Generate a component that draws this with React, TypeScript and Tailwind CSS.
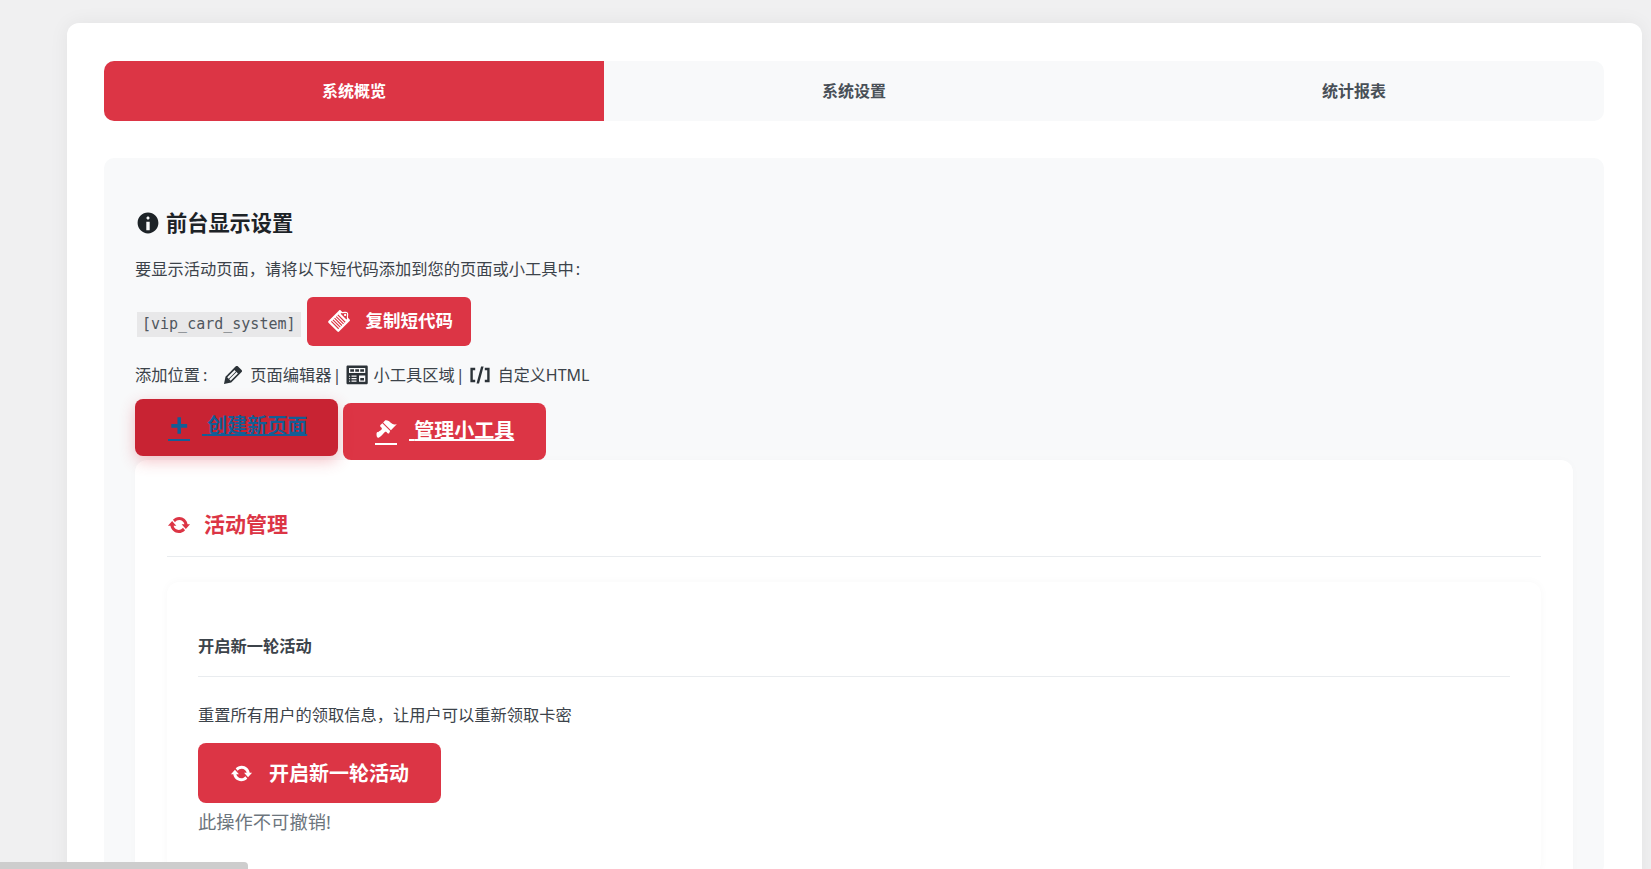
const updatePath =
  "M10.2 3.28c3.53 0 6.43 2.61 6.92 6h2.08l-3.5 4-3.5-4h2.32c-.45-1.97-2.21-3.45-4.32-3.45-1.45 0-2.73.71-3.54 1.78L4.95 5.66C6.23 4.2 8.11 3.28 10.2 3.28zm-.4 13.44c-3.52 0-6.43-2.61-6.92-6H.8l3.5-4c1.17 1.33 2.33 2.67 3.5 4H5.48c.45 1.97 2.21 3.45 4.32 3.45 1.45 0 2.73-.71 3.54-1.78l1.71 1.95c-1.28 1.46-3.15 2.38-5.25 2.38z";
const clipboardPath =
  "M11.9.39l1.4 1.4c1.61.19 3.5-.74 4.61.37s.18 3 .37 4.61l1.4 1.4c.39.39.39 1.02 0 1.41l-9.19 9.2c-.4.39-1.03.39-1.42 0L1.29 11c-.39-.39-.39-1.02 0-1.42l9.2-9.19c.39-.39 1.02-.39 1.41 0zm.58 2.25l-.58.58 4.95 4.95.58-.58c-.19-.6-.2-1.22-.15-1.82.02-.31.05-.62.09-.92.12-1 .18-1.63-.17-1.98s-.98-.29-1.98-.17c-.3.04-.61.07-.92.09-.6.05-1.22.04-1.82-.15zm4.02.93c.39.39.39 1.03 0 1.42s-1.03.39-1.42 0-.39-1.03 0-1.42 1.03-.39 1.42 0zm-6.72.36l-.71.7L15.44 11l.7-.71zM8.36 5.34l-.7.71 6.36 6.36.71-.7zM6.95 6.76l-.71.7 6.37 6.37.7-.71zM5.54 8.17l-.71.71 6.36 6.36.71-.71zM4.12 9.58l-.71.71 6.37 6.37.71-.71z";
const pencilPath =
  "M13.89 3.39l2.71 2.72c.46.46.42 1.24.03 1.64l-8.01 8.02-5.56 1.16 1.16-5.58s7.6-7.63 7.99-8.03c.39-.39 1.22-.39 1.68.07zm-2.73 2.79l-5.59 5.61 1.11 1.11 5.54-5.65zm-2.97 8.23l5.58-5.6-1.07-1.08-5.59 5.6z";
const shortcodePath = "M6 14H4V6h2V4H2v12h4M7.1 17h2.1l3.8-14h-2.1M14 4v2h2v8h-2v2h4V4";
const brushPath =
  "M14.48 11.06L7.41 3.99l1.5-1.5c.5-.56 2.3-.47 3.51.32 1.21.8 1.43 1.28 2.91 2.1 1.18.64 2.45 1.26 4.45.85zm-.71.71L6.7 4.7 4.93 6.47c-.39.39-.39 1.02 0 1.41l1.06 1.06c.39.39.39 1.03 0 1.42-.6.6-1.43 1.11-2.21 1.69-.35.26-.7.53-1.01.84C1.43 11.78.96 14.6 1.78 17.2c.3.7 1.2.96 1.9.55 1.3-.7 2.5-1.8 3.6-3.1.5-.6 1.1-1.3 1.7-1.9.39-.39 1.03-.39 1.42 0l1.06 1.06c.39.39 1.02.39 1.41 0z";
const infoPath =
  "M10 2c4.42 0 8 3.58 8 8s-3.58 8-8 8-8-3.58-8-8 3.58-8 8-8zm1.2 4.2c0-.66-.54-1.2-1.2-1.2s-1.2.54-1.2 1.2.54 1.2 1.2 1.2 1.2-.54 1.2-1.2zm.1 9.3V9h-2.6v6.5z";
const widgetsPath =
  "M19 16V3c0-.55-.45-1-1-1H3c-.55 0-1 .45-1 1v13c0 .55.45 1 1 1h15c.55 0 1-.45 1-1zM4 4h13v4H4V4zm1 1v2h3V5H5zm4 0v2h3V5H9zm4 0v2h3V5h-3zm-8.5 5c.28 0 .5.22.5.5s-.22.5-.5.5-.5-.22-.5-.5.22-.5.5-.5zM6 10h4v1H6v-1zm6 0h5v5h-5v-5zm-7.5 2c.28 0 .5.22.5.5s-.22.5-.5.5-.5-.22-.5-.5.22-.5.5-.5zM6 12h4v1H6v-1zm7 0v2h3v-2h-3zm-8.500 2c.28 0 .5.22.5.5s-.22.5-.5.5-.5-.22-.5-.5.22-.5.5-.5zM6 14h4v1H6v-1z";
const plusPath = "M8.6 3h3.2v6.2h5.6v3.2h-5.6V18H8.6v-5.600H3V9.200h5.600z";

function Icon({ d, className }: { d: string; className: string }) {
  return (
    <svg viewBox="0 0 20 20" fill="currentColor" fillRule="evenodd" className={className}>
      <path d={d} />
    </svg>
  );
}

export default function App() {
  return (
    <div className="relative h-[869px] overflow-hidden bg-[#f0f0f1] pt-[23px] pl-[67px] pr-[9px] font-['Noto_Sans','Noto_Sans_CJK_SC',sans-serif] text-[16.25px] text-[#3c434a]">
      <div className="rounded-[12px] bg-white pl-[37px] pr-[38px] pt-[38px] pb-10 shadow-[0_0_20px_rgba(0,0,0,0.06)]">
        <div className="mb-[37px] flex h-[60px] overflow-hidden rounded-[10px] bg-[#f8f9fa] text-[16px] font-bold text-[#495057]">
          <div className="flex flex-1 items-center justify-center bg-[#dc3545] text-white">系统概览</div>
          <div className="flex flex-1 items-center justify-center">系统设置</div>
          <div className="flex flex-1 items-center justify-center">统计报表</div>
        </div>

        <div className="rounded-[10px] bg-[#f8f9fa] px-[31px] pt-[50px]">
          <h2 className="flex h-[30px] items-center text-[21.2px] font-bold text-[#1d2327]">
            <Icon d={infoPath} className="mr-[5px] h-[26px] w-[26px]" />
            前台显示设置
          </h2>
          <p className="mt-[19px] h-[24px] leading-[24px]">
            要显示活动页面，请将以下短代码添加到您的页面或小工具中<span className="ml-[2px]">:</span>
          </p>

          <div className="mt-[16px] flex h-[49px] items-center">
            <code className="mt-[5px] mr-[6px] ml-[2px] h-[25px] bg-[#e8e8e9] px-[5px] font-['DejaVu_Sans_Mono',monospace] text-[15px] leading-[25px] text-[#50575e]">
              [vip_card_system]
            </code>
            <button className="flex h-[49px] w-[164px] items-center rounded-[6px] bg-[#dc3545] pl-[20px] text-[17.5px] font-bold text-white">
              <Icon d={clipboardPath} className="h-[23px] w-[23px]" />
              <span className="ml-[16px] pb-[2px]">复制短代码</span>
            </button>
          </div>

          <div className="mt-[16px] flex h-[26px] items-center whitespace-pre">
            <span>
              添加位置<span className="ml-[3px]">:</span>
            </span>
            <Icon d={pencilPath} className="ml-[13px] h-[26px] w-[26px] text-[#2c3338]" />
            <span className="ml-[4px]">页面编辑器</span>
            <span className="ml-px">|</span>
            <Icon d={widgetsPath} className="ml-[2px] h-[25px] w-[25px] text-[#2c3338]" />
            <span className="ml-[5px]">小工具区域</span>
            <span className="ml-px">|</span>
            <Icon d={shortcodePath} className="ml-[3px] h-[24px] w-[24px] text-[#2c3338]" />
            <span className="ml-[6px] text-[16px]">自定义HTML</span>
          </div>

          <div className="mt-[15px] flex gap-[5px]">
            <a className="flex h-[57px] w-[203px] -translate-y-1 items-center rounded-[8px] bg-[#c82333] pl-[33px] text-[20px] font-bold text-[#135e96] shadow-[0_5px_15px_rgba(220,53,69,0.3)]">
              <span className="border-b-2 border-[#135e96] pb-[3px]">
                <Icon d={plusPath} className="h-[22px] w-[22px]" />
              </span>
              <span className="ml-[12px] whitespace-pre pb-[3px] underline">{" "}创建新页面</span>
            </a>
            <a className="flex h-[57px] w-[203px] items-center rounded-[8px] bg-[#dc3545] pl-[32px] text-[20px] font-bold text-white">
              <span className="border-b-2 border-white pb-[3px]">
                <Icon d={brushPath} className="h-[22px] w-[22px]" />
              </span>
              <span className="ml-[12px] whitespace-pre pb-[2px] underline">{" "}管理小工具</span>
            </a>
          </div>

          <div className="rounded-t-[12px] bg-white px-[32px] pt-[27px] shadow-[0_0_10px_rgba(0,0,0,0.02)]">
            <h3 className="flex h-[70px] items-start border-b border-[#e9ecef] pt-[22px] text-[21px] font-bold text-[#dc3545]">
              <Icon d={updatePath} className="mt-[4px] h-[24px] w-[24px]" />
              <span className="ml-[13px]">活动管理</span>
            </h3>

            <div className="mt-[25px] rounded-[12px] bg-white px-[31px] pt-[52px] pb-10 shadow-[0_0_10px_rgba(0,0,0,0.03)]">
              <h4 className="h-[43px] border-b border-[#e9ecef] font-bold text-[#3c434a]">开启新一轮活动</h4>
              <p className="mt-[26px] h-[24px] leading-[24px]">重置所有用户的领取信息，让用户可以重新领取卡密</p>
              <button className="mt-[16px] flex h-[60px] w-[243px] items-center rounded-[8px] bg-[#dc3545] pl-[32px] text-[20px] font-bold text-white">
                <Icon d={updatePath} className="h-[23px] w-[23px]" />
                <span className="ml-[16px] pt-[2px]">开启新一轮活动</span>
              </button>
              <p className="mt-[5px] text-[18.3px] text-[#6c757d]">此操作不可撤销!</p>
            </div>
          </div>
        </div>
      </div>
      <div className="absolute bottom-0 left-0 h-[7px] w-[248px] rounded-tr-[4px] bg-[#cdcdcd]" />
    </div>
  );
}
